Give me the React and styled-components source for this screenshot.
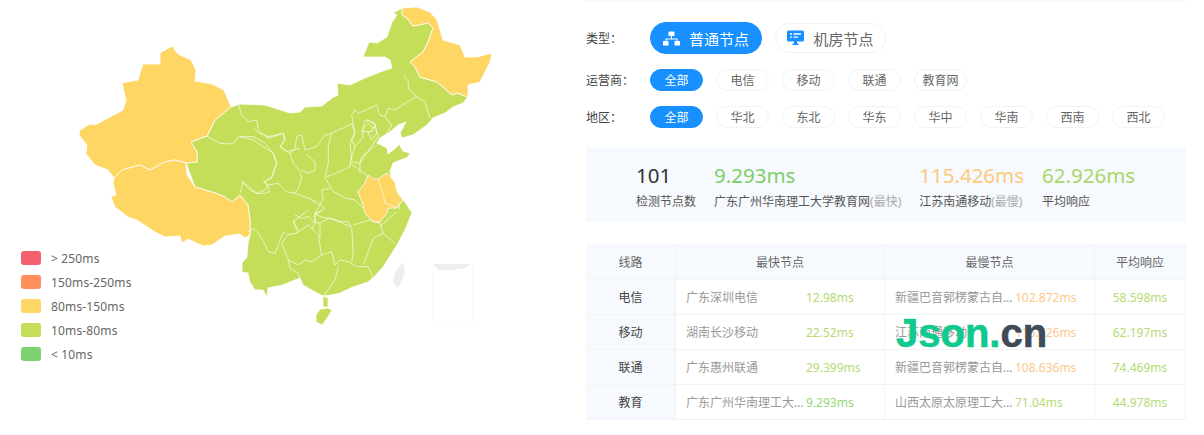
import React from "react";
import styled, { createGlobalStyle } from "styled-components";

const GlobalStyle = createGlobalStyle`
    html, body { margin: 0; padding: 0; background: #fff; }
    body { font-family: "Noto Sans", "Noto Sans CJK SC", sans-serif; color: #555; }
`

const Page = styled.div`
    display: flex;
    width: 1204px;
    height: 435px;
    overflow: hidden;
`

const MapPanel = styled.div`
    position: relative;
    width: 586px;
    height: 435px;
    flex: none;
`

const Legend = styled.ul`
    position: absolute;
    left: 21px;
    top: 246px;
    margin: 0;
    padding: 0;
    list-style: none;
`

const LegendItem = styled.li`
    display: flex;
    align-items: center;
    height: 24px;
    font-size: 12px;
    letter-spacing: 0.15px;
    color: #666;
`

const Swatch = styled.span`
    width: 20px;
    height: 14px;
    margin-right: 10px;
    border-radius: 3px;
    background: ${p => p.$color};
`

const Side = styled.div`
    position: relative;
    width: 600px;
    flex: none;
`

const TopLine = styled.div`
    height: 2px;
    background: #f6f9fd;
`

const FilterRow = styled.div`
    display: flex;
    align-items: center;
    gap: 13px;
    margin-top: ${p => p.$top}px;
`

const Label = styled.span`
    width: 51px;
    flex: none;
    font-size: 12px;
    color: #444;
`

const Pill = styled.span`
    display: flex;
    align-items: center;
    justify-content: center;
    box-sizing: border-box;
    width: 53px;
    height: 22px;
    border-radius: 11px;
    font-size: 12px;
    color: ${p => (p.$active ? "#fff" : "#666")};
    background: ${p => (p.$active ? "#1890ff" : "#fff")};
    border: 1px solid ${p => (p.$active ? "#1890ff" : "#f1f3f6")};
`

const BigPill = styled(Pill)`
    width: ${p => (p.$active ? 112 : 111)}px;
    height: ${p => (p.$active ? 32 : 30)}px;
    border-radius: 16px;
    font-size: 15px;
    gap: 9px;
`

const Stats = styled.div`
    display: flex;
    gap: 18px;
    box-sizing: border-box;
    height: 75px;
    margin-top: 19px;
    padding: 14px 0 0 50px;
    background: #f6f9fd;
`

const Value = styled.div`
    font-size: 20.5px;
    line-height: 28px;
    color: ${p => p.$color};
`

const Caption = styled.div`
    margin-top: 4px;
    font-size: 12px;
    line-height: 18px;
    color: #555;
    white-space: nowrap;
    em { font-style: normal; color: #aaa; }
`

const Table = styled.div`
    display: grid;
    grid-template-columns: 90px 209px 210px 91px;
    grid-auto-rows: 35px;
    margin-top: 22px;
    border-bottom: 1px solid #f1f3f6;
    font-size: 12px;
`

const HeadCell = styled.div`
    display: flex;
    align-items: center;
    justify-content: center;
    background: #f6f9fd;
    border-right: 1px solid #f1f3f6;
    color: #666;
`

const RowHead = styled(HeadCell)`
    border-top: 1px solid #f1f3f6;
    color: #444;
`

const Cell = styled.div`
    display: flex;
    align-items: center;
    justify-content: ${p => (p.$center ? "center" : "flex-start")};
    padding-left: ${p => (p.$center ? 0 : 10)}px;
    border-top: 1px solid #f1f3f6;
    border-right: 1px solid #f1f3f6;
    min-width: 0;
`

const NodeName = styled.span`
    flex: none;
    width: ${p => p.$width}px;
    overflow: hidden;
    white-space: nowrap;
    text-overflow: ellipsis;
    color: #999;
`

const Ms = styled.span`
    white-space: nowrap;
    color: ${p => p.$color};
`

const Watermark = styled.div`
    position: absolute;
    left: 310px;
    top: 308px;
    font-family: "Liberation Sans", sans-serif;
    font-weight: 700;
    font-size: 40px;
    line-height: 50px;
    color: #10c98f;
    -webkit-text-stroke: 0.6px currentColor;
    white-space: nowrap;
    span { color: #3f4b58; }
`

const YELLOW = "#fdd663";
const GREEN = "#c4de5a";

const OrgIcon = () => (
    <svg width="17" height="15" viewBox="0 0 17 15" fill="#fff">
        <rect x="5.5" y="0.5" width="6" height="4.5" rx="0.6" />
        <path d="M8 5h1v2.5h5.5V10h-1V8.5h-10V10h-1V7.500H8z" />
        <rect x="0" y="10" width="5.500" height="4.500" rx="0.6" />
        <rect x="11.500" y="10" width="5.500" height="4.500" rx="0.6" />
    </svg>
)

const RoomIcon = () => (
    <svg width="17" height="16" viewBox="0 0 17 16">
        <path fill="#1890ff" d="M1.500 0.500h14a1.500 1.500 0 0 1 1.500 1.500v8a1.500 1.500 0 0 1-1.500 1.500H10v2h1.500v1.500h-6V13.500H7v-2H1.500A1.500 1.500 0 0 1 0 10V2A1.500 1.500 0 0 1 1.500 0.500z" />
        <path stroke="#fff" strokeWidth="1.300" d="M3 4h2M6.500 4H14M3 7.200h2M6.500 7.200H11" />
    </svg>
)

const ChinaMap = () => (
    <svg width="586" height="435" viewBox="0 0 586 435">
        {/* land */}
        <g stroke="#fff" strokeWidth="0.8" strokeLinejoin="round">
            <path fill={GREEN} d="M186 163L197 162L197 152L191 142L207 136L215 120L231 107L240 104L265 105L290 113L300 112L305 107L322 106L332 98L338 95L337 83L350 85L365 78L380 72L392 68L390 60L385 57L363 57L369 42L377 43L387 37L392 22L397 15L393 13L402 8L402 15L407 18L413 26L428 23L433 28L428 42L423 52L410 62L415 67L420 77L437 82L443 87L452 95L457 93L468 97L463 103L453 107L445 113L433 118L427 125L413 135L402 138L400 133L406 122L398 125L390 132L380 138L377 143L387 148L388 154L397 147L399 144L403 151L410 153L408 157L393 163L390 172L393 183L398 193L405 202L412 213L405 230L397 245L392 253L383 267L373 278L368 282L353 287L340 293L332 295L323 296L315 292L303 285L300 278L295 280L283 285L268 288L267 297L263 290L255 290L250 282L248 273L242 272L242 263L247 257L248 243L250 235L250 220L248 205L240 195L232 202L225 197L215 193L195 187Z" />
            <path fill={GREEN} d="M323 296L328 298L328 307L323 307Z" />
            <path fill={GREEN} d="M320 309L328 308L332 310L328 317L322 325L316 322L316 315Z" />
            <path fill={YELLOW} d="M172 46L160 53L160 64L143 64L138 80L122 83L126 100L123 110L108 118L95 125L90 124L80 130L79 135L87 145L86 154L95 165L108 170L114 178L122 170L140 165L150 170L165 162L175 160L186 163L197 162L197 152L191 142L207 136L215 120L231 107L224 90L212 84L195 81L196 70L191 60L178 54Z" />
            <path fill={YELLOW} d="M114 178L113 183L116 195L111 197L115 207L128 217L137 220L155 232L165 237L180 236L182 243L188 239L203 246L212 245L225 236L240 234L245 238L250 235L250 220L248 205L240 195L232 202L225 197L215 193L195 187L187 175L186 163L175 160L165 162L150 170L140 165L122 170Z" />
            <path fill={YELLOW} d="M402 8L417 7L430 12L437 20L443 40L460 45L465 57L477 57L492 53L490 62L480 82L468 85L468 97L457 93L452 95L443 87L437 82L420 77L415 67L410 62L423 52L428 42L433 28L428 23L413 26L407 18L402 15Z" />
            <path fill={YELLOW} d="M368 175L373 179L378 179L387 173L395 182L397 192L403 200L397 208L388 208L387 213L380 222L373 222L365 213L363 205L358 192L365 183Z" />
        </g>
        <path fill="#eee" d="M403 262L405 273L398 288L393 282L395 272Z" />
        <path fill="none" stroke="#f9f9f9" d="M433 265H473V323H433Z" />
        <path fill="#eee" d="M433 264H470L466 268L452 270L438 270Z" />

        {/* province borders, in 3x crop units */}
        <g fill="none" stroke="#fff" strokeOpacity="0.8" strokeWidth="2.400" strokeLinejoin="round">
            <g transform="translate(0 0) scale(0.3333)">
                <path d="M715 312L725 345L745 365L770 360L775 390L805 415L850 400L855 420L840 440L860 455L900 445" />
                <path d="M620 408L660 430L700 432L715 410L760 420L820 460L830 490L815 530L795 545L810 575L795 580L770 580L730 545L720 580" />
            </g>
            <g transform="translate(280 0) scale(0.3333)">
                <path d="M372 225L385 245L385 265L410 290L375 310L345 330L325 325L315 350L335 375L320 400" />
                <path d="M410 290L435 305L450 355" />
                <path d="M215 345L225 330L235 340L290 315L300 345L315 350" />
                <path d="M250 375L265 360L285 375L275 395L250 395Z" />
                <path d="M215 345L220 375L225 400L210 430L215 480" />
                <path d="M285 375L295 410L270 445L240 490L240 520" />
            </g>
            <g transform="translate(240 120) scale(0.3333)">
                <path d="M0 50L40 50L75 70L100 100L110 130L95 175L70 185L85 195L75 210L50 220L30 210L5 185" />
                <path d="M85 195L115 190L140 215L165 220L215 238L225 250" />
                <path d="M40 25L60 40L85 50L130 40L135 60L120 80L150 100L160 130L180 155L185 175L175 205L165 220" />
                <path d="M150 100L165 85L170 50L185 45L195 90L230 80L255 45L275 40L335 12L345 35L335 60L345 80L330 125" />
                <path d="M200 105L225 125L225 150L205 160L185 150" />
                <path d="M275 40L265 75L265 130L255 170L270 200L280 215L320 235L345 240L370 265" />
                <path d="M260 170L300 155L330 140L332 125L360 130L365 110L410 75" />
                <path d="M330 130L360 150L380 165" />
                <path d="M245 210L270 205M245 210L250 235L225 280L240 290L265 295L275 295L330 320" />
                <path d="M220 240L255 265L225 285L225 310L215 330" />
                <path d="M165 285L185 295L205 290L225 310M160 300L170 330" />
                <path d="M370 5L380 0L405 10L410 40L395 60L385 40L400 25L385 10L365 30L370 50L345 80" />
                <path d="M415 178L430 225L435 250L470 262" />
                <path d="M480 270L475 245M420 320L470 275" />
            </g>
            <g transform="translate(240 210) scale(0.3333)">
                <path d="M25 65L40 55L60 75L85 125L105 130L130 65L140 75L170 70L205 45L235 75L245 135" />
                <path d="M160 35L175 60L170 70M160 35L180 20L205 0" />
                <path d="M125 100L140 80M125 100L145 150L150 175L175 190L180 205" />
                <path d="M145 150L175 165L195 150L215 155L245 135L275 125L285 165L300 150L325 155L350 170L385 170L400 205" />
                <path d="M295 170L285 210L260 245L250 260" />
                <path d="M240 85L240 40L225 35L225 10L250 0M240 40L265 25L300 35L325 35L335 55L340 130L335 155" />
                <path d="M340 45L390 30L420 40L430 70L465 100M430 70L400 85L385 125L370 165" />
            </g>
        </g>
    </svg>
)

const legend = [
    ["#f5606f", "> 250ms"],
    ["#ff8f5c", "150ms-250ms"],
    ["#fdd663", "80ms-150ms"],
    ["#c4de58", "10ms-80ms"],
    ["#7ed071", "< 10ms"],
];

const carriers = ["全部", "电信", "移动", "联通", "教育网"];
const regions = ["全部", "华北", "东北", "华东", "华中", "华南", "西南", "西北"];

const LIME = "#b5db74";
const AMBER = "#fdc88a";
const MINT = "#93d873";

const rows = [
    ["电信", "广东深圳电信", "12.98ms", LIME, "新疆巴音郭楞蒙古自治州移动", "102.872ms", AMBER, "58.598ms"],
    ["移动", "湖南长沙移动", "22.52ms", LIME, "江苏南通移动", "115.426ms", AMBER, "62.197ms"],
    ["联通", "广东惠州联通", "29.399ms", LIME, "新疆巴音郭楞蒙古自治州联通", "108.636ms", AMBER, "74.469ms"],
    ["教育", "广东广州华南理工大学教育网", "9.293ms", MINT, "山西太原太原理工大学教育网", "71.04ms", LIME, "44.978ms"],
];

export default function App() {
    return (
        <Page>
            <GlobalStyle />
            <MapPanel>
                <ChinaMap />
                <Legend>
                    {legend.map(([color, text]) => (
                        <LegendItem key={text}><Swatch $color={color} />{text}</LegendItem>
                    ))}
                </Legend>
            </MapPanel>
            <Side>
                <TopLine />
                <FilterRow $top={20}>
                    <Label>类型：</Label>
                    <BigPill $active><OrgIcon />普通节点</BigPill>
                    <BigPill><RoomIcon />机房节点</BigPill>
                </FilterRow>
                <FilterRow $top={15}>
                    <Label>运营商：</Label>
                    {carriers.map((c, i) => <Pill key={c} $active={i === 0}>{c}</Pill>)}
                </FilterRow>
                <FilterRow $top={15}>
                    <Label>地区：</Label>
                    {regions.map((r, i) => <Pill key={r} $active={i === 0}>{r}</Pill>)}
                </FilterRow>
                <Stats>
                    <div>
                        <Value $color="#333">101</Value>
                        <Caption>检测节点数</Caption>
                    </div>
                    <div>
                        <Value $color="#7ccf6a">9.293ms</Value>
                        <Caption>广东广州华南理工大学教育网<em>(最快)</em></Caption>
                    </div>
                    <div>
                        <Value $color="#fdc97c">115.426ms</Value>
                        <Caption>江苏南通移动<em>(最慢)</em></Caption>
                    </div>
                    <div>
                        <Value $color="#a9d867">62.926ms</Value>
                        <Caption>平均响应</Caption>
                    </div>
                </Stats>
                <Table>
                    <HeadCell>线路</HeadCell>
                    <HeadCell>最快节点</HeadCell>
                    <HeadCell>最慢节点</HeadCell>
                    <HeadCell>平均响应</HeadCell>
                    {rows.map(r => (
                        <React.Fragment key={r[0]}>
                            <RowHead>{r[0]}</RowHead>
                            <Cell><NodeName $width={120}>{r[1]}</NodeName><Ms $color={r[3]}>{r[2]}</Ms></Cell>
                            <Cell><NodeName $width={120}>{r[4]}</NodeName><Ms $color={r[6]}>{r[5]}</Ms></Cell>
                            <Cell $center><Ms $color={LIME}>{r[7]}</Ms></Cell>
                        </React.Fragment>
                    ))}
                </Table>
                <Watermark>Json.<span>cn</span></Watermark>
            </Side>
        </Page>
    );
}
